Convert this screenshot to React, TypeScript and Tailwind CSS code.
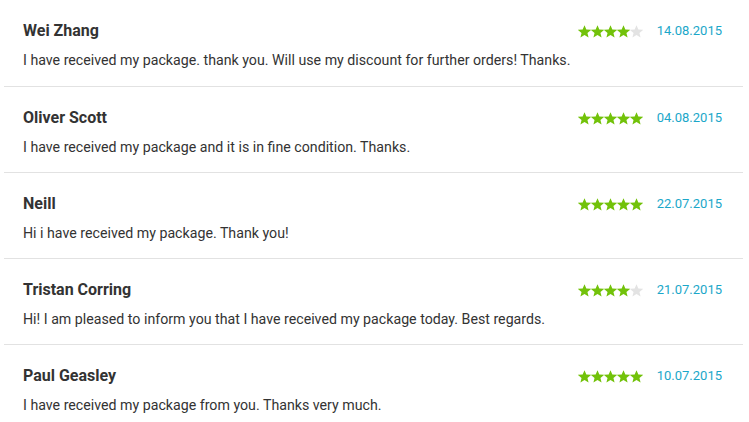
import React from 'react';

interface Review {
  name: string;
  text: string;
  rating: number;
  date: string;
}

const reviews: Review[] = [
  { name: 'Wei Zhang', text: 'I have received my package. thank you. Will use my discount for further orders! Thanks.', rating: 4, date: '14.08.2015' },
  { name: 'Oliver Scott', text: 'I have received my package and it is in fine condition. Thanks.', rating: 5, date: '04.08.2015' },
  { name: 'Neill', text: 'Hi i have received my package. Thank you!', rating: 5, date: '22.07.2015' },
  { name: 'Tristan Corring', text: 'Hi! I am pleased to inform you that I have received my package today. Best regards.', rating: 4, date: '21.07.2015' },
  { name: 'Paul Geasley', text: 'I have received my package from you. Thanks very much.', rating: 5, date: '10.07.2015' },
];

const Star: React.FC<{ filled: boolean }> = ({ filled }) => (
  <svg width="13" height="13" viewBox="1 1.5 22 21.5" className={filled ? 'fill-[#72c20a]' : 'fill-[#e3e3e3]'}>
    <path d="M12 1.5l3.1 7.4 8 .6-6.1 5.2 1.9 7.8L12 18.3l-6.9 4.2 1.9-7.8L.9 9.5l8-.6z" />
  </svg>
);

export default function App() {
  return (
    <div className="min-h-[422px] w-[749px] bg-white font-['Roboto',sans-serif]">
      <div className="mx-[4px] w-[739px]">
        {reviews.map((r, i) => (
          <div
            key={r.name}
            className={`flex flex-col pl-[19px] pr-[21px] pt-[20px] ${i === 0 ? 'pb-[16px]' : 'pb-[15px]'} ${i < reviews.length - 1 ? 'border-b border-[#e2e2e2]' : ''}`}
          >
            <div className="flex h-[22px] items-center justify-between">
              <span className="text-[16px] font-bold text-[#333333]">{r.name}</span>
              <div className="flex items-center gap-[14px]">
                <div className="flex">
                  {[0, 1, 2, 3, 4].map((s) => (
                    <Star key={s} filled={s < r.rating} />
                  ))}
                </div>
                <span className="text-[13px] text-[#1ba7c9]">{r.date}</span>
              </div>
            </div>
            <p className="mt-[8px] h-[20px] text-[14.2px] leading-[20px] text-[#333333]">{r.text}</p>
          </div>
        ))}
      </div>
    </div>
  );
}
